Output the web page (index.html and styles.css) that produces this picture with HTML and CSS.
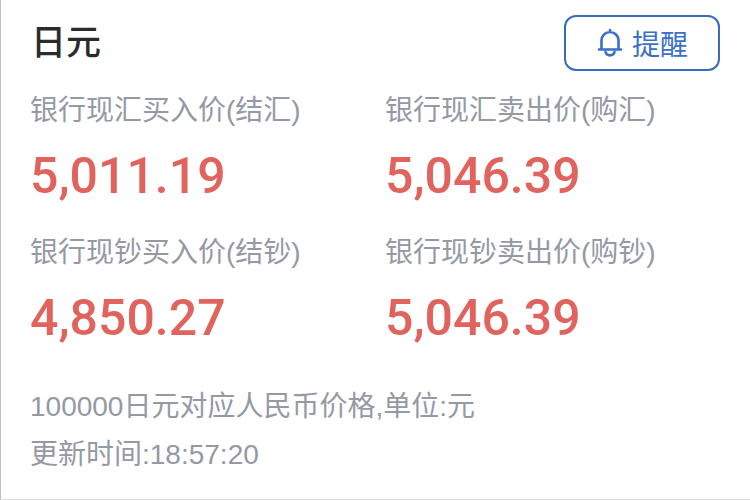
FILE: index.html
```html
<!DOCTYPE html>
<html lang="zh-CN">
<head>
<meta charset="utf-8">
<title>日元</title>
<link rel="stylesheet" href="styles.css">
</head>
<body>
<main class="card">
  <header class="head">
    <h1 class="title">日元</h1>
    <button class="remind" type="button">
      <svg class="bell" viewBox="0 0 28 30" aria-hidden="true">
        <path d="M14 2v2M3 21.500h22M5.500 21V12.500a8.500 8.500 0 0 1 17 0V21M9.500 24c1.200 4.500 7.800 4.500 9 0"/>
      </svg>
      <span>提醒</span>
    </button>
  </header>
  <dl class="rates">
    <div class="rate"><dt>银行现汇买入价(结汇)</dt><dd>5,011.19</dd></div>
    <div class="rate"><dt>银行现汇卖出价(购汇)</dt><dd>5,046.39</dd></div>
    <div class="rate"><dt>银行现钞买入价(结钞)</dt><dd>4,850.27</dd></div>
    <div class="rate"><dt>银行现钞卖出价(购钞)</dt><dd>5,046.39</dd></div>
  </dl>
  <footer class="notes">
    <p>100000日元对应人民币价格,单位:元</p>
    <p>更新时间:18:57:20</p>
  </footer>
</main>
</body>
</html>
```
FILE: styles.css
```css
* { box-sizing: border-box; }
body {
  margin: 0;
  background: #fff;
  color: #9499a4;
  font-family: "Liberation Sans", "Noto Sans CJK SC", sans-serif;
  font-size: 28px;
}
.card {
  min-height: 100vh;
  padding: 15px 30px 0 29px;
  border-left: 1px solid #c0c0c2;
  border-bottom: 1px solid #dedee0;
}
.head {
  display: flex;
  align-items: center;
  justify-content: space-between;
}
.title {
  margin: 0;
  padding-left: 1px;
  color: #2b2b2d;
  font-size: 35px;
  line-height: 56px;
  font-weight: 500;
}
.remind {
  display: flex;
  align-items: center;
  justify-content: center;
  gap: 8px;
  width: 156px;
  height: 56px;
  padding: 0;
  border: 2px solid #3a6cba;
  border-radius: 12px;
  background: #fff;
  color: #3a70c6;
  font: inherit;
}
.bell {
  width: 28px;
  height: 30px;
  fill: none;
  stroke: currentColor;
  stroke-width: 2.6;
  stroke-linecap: round;
}
.rates {
  display: grid;
  grid-template-columns: 1fr 1fr;
  column-gap: 20px;
  margin: 20px 0 0;
}
.rate { height: 142px; }
.rate dt { line-height: 40px; }
.rate dd {
  margin: 15px 0 0;
  color: #e0635e;
  font-family: Roboto, sans-serif;
  font-size: 50px;
  line-height: 60px;
  font-weight: 500;
}
.notes { margin-top: 8px; }
.notes p {
  margin: 0;
  line-height: 48px;
}
```
